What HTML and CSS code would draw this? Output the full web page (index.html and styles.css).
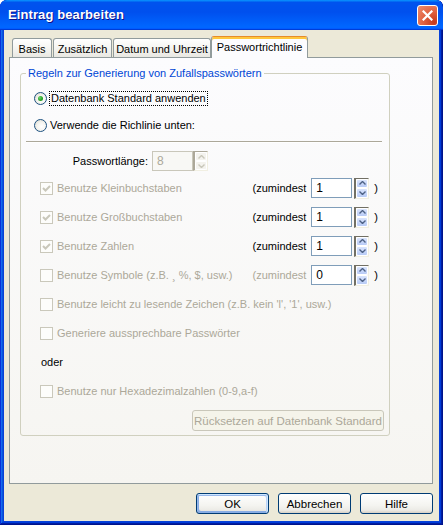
FILE: index.html
```html
<!DOCTYPE html>
<html lang="de">
<head>
<meta charset="utf-8">
<title>Eintrag bearbeiten</title>
<link rel="stylesheet" href="styles.css">
</head>
<body>
<div class="window">
  <div class="titlebar">
    <span class="title">Eintrag bearbeiten</span>
    <span class="close">
      <svg width="11" height="11" viewBox="0 0 11 11"><path d="M1.5 1.5 L9.5 9.5 M9.5 1.5 L1.5 9.5" stroke="#fff" stroke-width="2.2" stroke-linecap="square"/></svg>
    </span>
  </div>
  <div class="client">
    <div class="tabs">
      <div class="tab tab-basis">Basis</div>
      <div class="tab tab-extra">Zusätzlich</div>
      <div class="tab tab-date">Datum und Uhrzeit</div>
      <div class="tab active">Passwortrichtlinie</div>
    </div>
    <div class="panel">
      <fieldset class="group">
        <legend>Regeln zur Generierung von Zufallspasswörtern</legend>

        <div class="row row-radio1">
          <span class="radio checked"></span>
          <span class="focus">Datenbank Standard anwenden</span>
        </div>
        <div class="row row-radio2">
          <span class="radio"></span>
          <span class="radio-label">Verwende die Richlinie unten:</span>
        </div>
        <div class="separator"></div>

        <div class="row row-pw">
          <span class="pw-label">Passwortlänge:</span>
          <span class="field disabled">8</span>
          <span class="spin disabled flush">
            <span class="spin-btn"><svg width="7" height="4" viewBox="0 0 7 4"><path d="M0.5 3.5 L3.5 0.5 L6.5 3.5" fill="none" stroke="currentColor" stroke-width="1.4"/></svg></span>
            <span class="spin-btn"><svg width="7" height="4" viewBox="0 0 7 4"><path d="M0.5 0.5 L3.5 3.5 L6.5 0.5" fill="none" stroke="currentColor" stroke-width="1.4"/></svg></span>
          </span>
        </div>

        <div class="row check-row row-first">
          <span class="check"><svg width="11" height="11" viewBox="0 0 11 11"><path d="M2 5 L4.5 7.5 L9 3" fill="none" stroke="#C9C7BA" stroke-width="2"/></svg></span>
          <span class="check-label">Benutze Kleinbuchstaben</span>
          <span class="minimum">
            <span class="at-least">(zumindest</span>
            <span class="field">1</span>
            <span class="spin">
              <span class="spin-btn"><svg width="7" height="4" viewBox="0 0 7 4"><path d="M0.5 3.5 L3.5 0.5 L6.5 3.5" fill="none" stroke="currentColor" stroke-width="1.4"/></svg></span>
              <span class="spin-btn"><svg width="7" height="4" viewBox="0 0 7 4"><path d="M0.5 0.5 L3.5 3.5 L6.5 0.5" fill="none" stroke="currentColor" stroke-width="1.4"/></svg></span>
            </span>
            <span class="paren">)</span>
          </span>
        </div>

        <div class="row check-row">
          <span class="check"><svg width="11" height="11" viewBox="0 0 11 11"><path d="M2 5 L4.5 7.5 L9 3" fill="none" stroke="#C9C7BA" stroke-width="2"/></svg></span>
          <span class="check-label">Benutze Großbuchstaben</span>
          <span class="minimum">
            <span class="at-least">(zumindest</span>
            <span class="field">1</span>
            <span class="spin">
              <span class="spin-btn"><svg width="7" height="4" viewBox="0 0 7 4"><path d="M0.5 3.5 L3.5 0.5 L6.5 3.5" fill="none" stroke="currentColor" stroke-width="1.4"/></svg></span>
              <span class="spin-btn"><svg width="7" height="4" viewBox="0 0 7 4"><path d="M0.5 0.5 L3.5 3.5 L6.5 0.5" fill="none" stroke="currentColor" stroke-width="1.4"/></svg></span>
            </span>
            <span class="paren">)</span>
          </span>
        </div>

        <div class="row check-row">
          <span class="check"><svg width="11" height="11" viewBox="0 0 11 11"><path d="M2 5 L4.5 7.5 L9 3" fill="none" stroke="#C9C7BA" stroke-width="2"/></svg></span>
          <span class="check-label">Benutze Zahlen</span>
          <span class="minimum">
            <span class="at-least">(zumindest</span>
            <span class="field">1</span>
            <span class="spin">
              <span class="spin-btn"><svg width="7" height="4" viewBox="0 0 7 4"><path d="M0.5 3.5 L3.5 0.5 L6.5 3.5" fill="none" stroke="currentColor" stroke-width="1.4"/></svg></span>
              <span class="spin-btn"><svg width="7" height="4" viewBox="0 0 7 4"><path d="M0.5 0.5 L3.5 3.5 L6.5 0.5" fill="none" stroke="currentColor" stroke-width="1.4"/></svg></span>
            </span>
            <span class="paren">)</span>
          </span>
        </div>

        <div class="row check-row">
          <span class="check"></span>
          <span class="check-label">Benutze Symbole (z.B. ¸ %, $, usw.)</span>
          <span class="minimum muted">
            <span class="at-least">(zumindest</span>
            <span class="field">0</span>
            <span class="spin">
              <span class="spin-btn"><svg width="7" height="4" viewBox="0 0 7 4"><path d="M0.5 3.5 L3.5 0.5 L6.5 3.5" fill="none" stroke="currentColor" stroke-width="1.4"/></svg></span>
              <span class="spin-btn"><svg width="7" height="4" viewBox="0 0 7 4"><path d="M0.5 0.5 L3.5 3.5 L6.5 0.5" fill="none" stroke="currentColor" stroke-width="1.4"/></svg></span>
            </span>
            <span class="paren">)</span>
          </span>
        </div>

        <div class="row check-row">
          <span class="check"></span>
          <span class="check-label">Benutze leicht zu lesende Zeichen (z.B. kein  'l', '1', usw.)</span>
        </div>

        <div class="row check-row">
          <span class="check"></span>
          <span class="check-label">Generiere aussprechbare Passwörter</span>
        </div>

        <div class="row or-row">oder</div>

        <div class="row check-row">
          <span class="check"></span>
          <span class="check-label">Benutze nur Hexadezimalzahlen (0-9,a-f)</span>
        </div>

        <div class="row reset-row">
          <span class="btn-disabled">Rücksetzen auf Datenbank Standard</span>
        </div>
      </fieldset>
    </div>
    <div class="buttons">
      <span class="btn default">OK</span>
      <span class="btn">Abbrechen</span>
      <span class="btn">Hilfe</span>
    </div>
  </div>
</div>
</body>
</html>
```

FILE: styles.css
```css
* { box-sizing: border-box; }
html, body { margin: 0; padding: 0; background: #ffffff; }
body {
  font: 11px "Liberation Sans", Arial, sans-serif;
  color: #000;
}

.window {
  width: 443px;
  height: 525px;
  display: flex;
  flex-direction: column;
  background: #0842d8;
  border-radius: 7px 7px 0 0;
  overflow: hidden;
  box-shadow: inset -1px -1px #00138c, inset 1px 1px #0831d9,
              inset -2px -2px #001ea0, inset 2px 2px #166aee,
              inset -3px -3px #003bda, inset 3px 3px #0855dd;
}

.titlebar {
  height: 30px;
  flex: none;
  display: flex;
  align-items: center;
  justify-content: space-between;
  padding: 0 5px 1px 8px;
  background: linear-gradient(180deg, #0997ff 0, #0053ee 8%, #0050ee 40%, #0066ff 88%, #0066ff 93%, #005bff 95%, #003dd7 96%, #003dd7 100%);
  border-radius: 7px 7px 0 0;
}
.title {
  color: #fff;
  font: bold 13px "Liberation Sans", Arial, sans-serif;
  text-shadow: 1px 1px #0f1089;
  letter-spacing: 0.1px;
}
.close {
  width: 21px;
  height: 21px;
  border: 1px solid #fff;
  border-radius: 3px;
  display: flex;
  align-items: center;
  justify-content: center;
  background: radial-gradient(circle at 85% 85%, #c4391b 0%, #e0603f 45%, #ee8e6f 100%);
  margin-top: 1px;
}

.client {
  flex: 1;
  margin: 0 4px 4px;
  background: #ece9d8;
  padding: 6px 6px 7px 5px;
  display: flex;
  flex-direction: column;
}

.tabs {
  display: flex;
  align-items: flex-end;
  height: 21px;
  padding-left: 3px;
  flex: none;
}
.tab {
  height: 19px;
  border: 1px solid #919b9c;
  border-bottom: none;
  border-radius: 3px 3px 0 0;
  background: linear-gradient(180deg, #ffffff 0%, #f3f3ef 60%, #e9e8e2 100%);
  display: flex;
  align-items: center;
  justify-content: center;
  margin-right: 1px;
  padding-top: 1px;
  white-space: nowrap;
}
.tab-basis { width: 40px; }
.tab-extra { width: 59px; }
.tab-date { width: 98px; margin-right: 0; }
.tab.active {
  width: 97px;
  height: 22px;
  margin-bottom: -1px;
  position: relative;
  z-index: 1;
  background: #fcfcfe;
  border-top: 1px solid #e68b2c;
  box-shadow: inset 0 2px 0 #ffc73c;
  padding-top: 0;
  padding-bottom: 2px;
}

.panel {
  flex: 1;
  border: 1px solid #919b9c;
  background: linear-gradient(180deg, #fcfcfe 0%, #f6f5f1 100%);
  padding: 8px 0 0 10px;
}

.group {
  width: 370px;
  margin: 0;
  border: 1px solid #d0d0bf;
  border-radius: 3px;
  padding: 0 13px 4px 13px;
}
.group legend {
  color: #0046d5;
  padding: 0 2px;
  margin-left: -8px;
  line-height: 14px;
}

.row {
  display: flex;
  align-items: center;
  height: 20px;
  margin-top: 9px;
  white-space: nowrap;
}
.row-radio1 { margin-top: 8px; }
.row-radio2 { margin-top: 7px; }
.row-pw { margin-top: 8px; }
.row-first { margin-top: 7px; }

.radio {
  width: 13px;
  height: 13px;
  border: 1px solid #1c5180;
  border-radius: 50%;
  background: radial-gradient(circle at 60% 60%, #ffffff 0%, #f4f4f0 45%, #d7d4c6 100%);
  display: flex;
  align-items: center;
  justify-content: center;
  margin-right: 3px;
  flex: none;
}
.radio.checked::after {
  content: "";
  width: 5px;
  height: 5px;
  border-radius: 50%;
  background: radial-gradient(circle at 35% 35%, #6fd56f 0%, #21a121 60%, #178a17 100%);
}
.focus {
  border: 1px dotted #000;
  padding: 0 1px;
  line-height: 13px;
  margin-left: -1px;
}
.radio-label { line-height: 13px; }

.separator {
  margin: 6px -6px 0 -8px;
  height: 2px;
  border-top: 1px solid #aca899;
  border-bottom: 1px solid #ffffff;
}

.pw-label {
  width: 118px;
  text-align: right;
  padding-right: 4px;
}

.field {
  width: 41px;
  height: 20px;
  border: 1px solid #7f9db9;
  background: #fff;
  padding-left: 4px;
  line-height: 18px;
  color: #000;
  font-size: 12px;
}
.field.disabled {
  border-color: #c9c7ba;
  background: #f8f8f5;
  color: #aca899;
}

.spin {
  width: 15px;
  height: 21px;
  margin-left: 2px;
  display: flex;
  flex-direction: column;
  border-style: solid;
  border-width: 1px 1px 1px 2px;
  border-color: #716f64 #f1efe2 #f1efe2 #716f64;
  color: #4d6185;
}
.spin.flush { margin-left: 0; height: 20px; }
.spin-btn {
  flex: 1;
  display: flex;
  align-items: center;
  justify-content: center;
  background: linear-gradient(180deg, #d9e4fd 0%, #b8cbf6 100%);
  border: 1px solid #ffffff;
  border-radius: 2px;
}
.spin.disabled { color: #c9c7ba; border-color: #aca899 #f1efe2 #f1efe2 #aca899; }
.spin.disabled .spin-btn { background: #f4f3ee; }

.check-row { padding-left: 6px; color: #aca899; }
.check {
  width: 13px;
  height: 13px;
  border: 1px solid #cac8bb;
  background: #fdfdfb;
  margin-right: 4px;
  flex: none;
  display: flex;
  align-items: center;
  justify-content: center;
}
.check-label { flex: 1; }
.minimum {
  display: flex;
  align-items: center;
  color: #000;
  margin-right: -2px;
}
.minimum.muted .at-least { color: #aca899; }
.at-least { margin-right: 5px; }
.paren { margin-left: 5px; }

.or-row { padding-left: 7px; }

.reset-row {
  justify-content: flex-end;
  margin-right: -8px;
  height: 21px;
}
.btn-disabled {
  width: 192px;
  height: 21px;
  border: 1px solid #c9c7ba;
  border-radius: 3px;
  background: #f5f4ea;
  color: #aca899;
  display: flex;
  align-items: center;
  justify-content: center;
  font-size: 11.5px;
}

.buttons {
  flex: none;
  display: flex;
  justify-content: flex-end;
  gap: 9px;
  margin-top: 9px;
}
.btn {
  width: 73px;
  height: 21px;
  border: 1px solid #003c74;
  border-radius: 3px;
  background: linear-gradient(180deg, #ffffff 0%, #f4f4f0 60%, #ecebe6 85%, #d6d0c5 100%);
  display: flex;
  align-items: center;
  justify-content: center;
  font-size: 11.5px;
}
.btn.default {
  box-shadow: inset -1px 1px #cee7ff, inset 1px 2px #98b8ea, inset -2px 2px #bcd4f6, inset 1px -1px #89ade4, inset 2px -2px #89ade4;
}
```
